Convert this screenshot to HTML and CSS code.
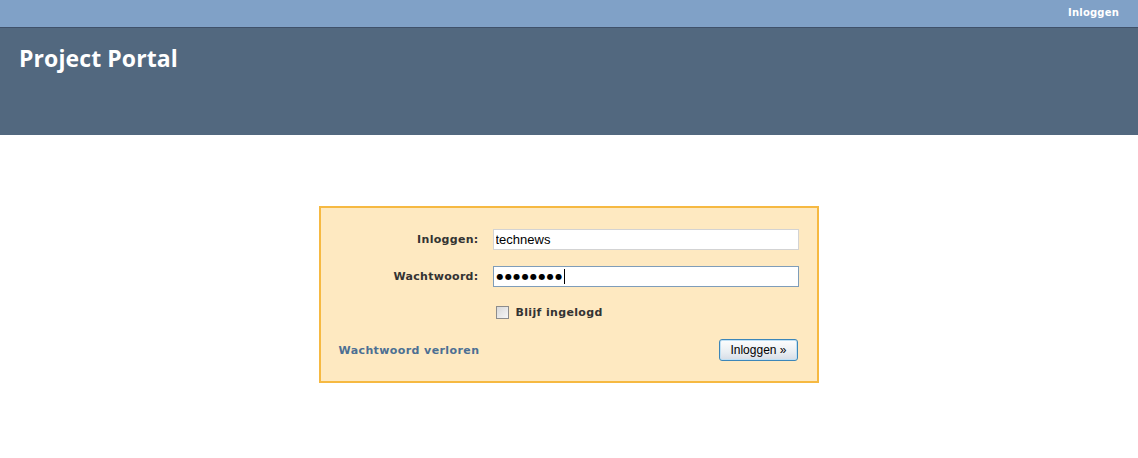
FILE: index.html
```html
<!DOCTYPE html>
<html lang="nl">
<head>
<meta charset="utf-8">
<title>Project Portal</title>
<link rel="stylesheet" href="styles.css">
</head>
<body>
<div class="topbar">
  <a class="toplink" href="#">Inloggen</a>
</div>
<div class="header">
  <h1 class="title">Project Portal</h1>
</div>
<main class="content">
  <form class="loginbox">
    <label class="label" for="user">Inloggen:</label>
    <input class="field" id="user" type="text" value="technews">
    <label class="label" for="pass">Wachtwoord:</label>
    <div class="field field-focus"><span class="dots">●●●●●●●●</span><span class="caret"></span></div>
    <span></span>
    <label class="remember"><input class="check" type="checkbox"> Blijf ingelogd</label>
    <div class="bottom">
      <a class="lost" href="#">Wachtwoord verloren</a>
      <button class="btn" type="button">Inloggen »</button>
    </div>
  </form>
</main>
</body>
</html>
```
FILE: styles.css
```css
html, body {
  margin: 0;
  padding: 0;
  background: #ffffff;
  font-family: Verdana, "DejaVu Sans", sans-serif;
}

.topbar {
  background: #80a1c7;
  border-bottom: 1px solid #3f516a;
  display: flex;
  justify-content: flex-end;
  align-items: center;
  padding-right: 19px;
  box-sizing: border-box;
  height: 28px;
}

.toplink {
  color: #ffffff;
  font-size: 10px;
  font-weight: bold;
  text-decoration: none;
  letter-spacing: 0.2px;
  margin-top: -2px;
}

.header {
  height: 107px;
  background: #52687f;
  padding: 15px 19px 0;
  box-sizing: border-box;
}

.title {
  margin: 0;
  color: #ffffff;
  font-family: "Open Sans", "DejaVu Sans", sans-serif;
  font-weight: bold;
  font-size: 23px;
  line-height: 31px;
  letter-spacing: 0.1px;
}

.content {
  display: flex;
  justify-content: center;
  padding-top: 71px;
}

.loginbox {
  width: 500px;
  box-sizing: border-box;
  background: #fee9c1;
  border: 2px solid #f6b942;
  padding: 21px 20px 20px 18px;
  display: grid;
  grid-template-columns: 140px 306px;
  column-gap: 14px;
  row-gap: 16px;
  align-items: center;
  margin-left: -1px;
}

.label {
  text-align: right;
  font-size: 11px;
  font-weight: bold;
  letter-spacing: 0.3px;
  color: #333333;
}

.field {
  height: 21px;
  box-sizing: border-box;
  border: 1px solid #d3d3d3;
  background: #ffffff;
  padding: 0 2px;
  font-family: Arial, "Liberation Sans", sans-serif;
  font-size: 13px;
  color: #000000;
  outline: none;
  margin: 0;
  width: 306px;
}

.field-focus {
  border-color: #7f9db9;
  display: flex;
  align-items: center;
}

.dots {
  font-family: "DejaVu Sans", sans-serif;
  font-size: 8px;
  letter-spacing: 1.4px;
  color: #000;
  padding-left: 1px;
}

.caret {
  display: inline-block;
  width: 1px;
  height: 15px;
  background: #000;
  margin-left: 0;
}

.remember {
  display: flex;
  align-items: center;
  gap: 7px;
  font-size: 11px;
  font-weight: bold;
  letter-spacing: 0.35px;
  color: #333333;
  margin-top: 3px;
  padding-left: 3px;
}

.check {
  appearance: none;
  -webkit-appearance: none;
  width: 13px;
  height: 13px;
  margin: 0;
  border: 1px solid #8c8c8c;
  background: linear-gradient(135deg, #d8d8d8, #f6f6f6);
  box-sizing: border-box;
}

.bottom {
  grid-column: 1 / 3;
  display: flex;
  justify-content: space-between;
  align-items: center;
  margin-top: 4px;
  padding-right: 1px;
}

.lost {
  color: #4c6f93;
  font-size: 11px;
  font-weight: bold;
  letter-spacing: 0.4px;
  text-decoration: none;
  margin-top: 1px;
}

.btn {
  height: 22px;
  padding: 0 10px;
  border: 1px solid #3d86b8;
  border-radius: 3px;
  background: linear-gradient(#fdfdfd, #e9eef2 60%, #d6dde6);
  font-family: Arial, "Liberation Sans", sans-serif;
  font-size: 12px;
  color: #000;
  box-shadow: inset 0 0 0 1px #bfe0f4;
}
```
